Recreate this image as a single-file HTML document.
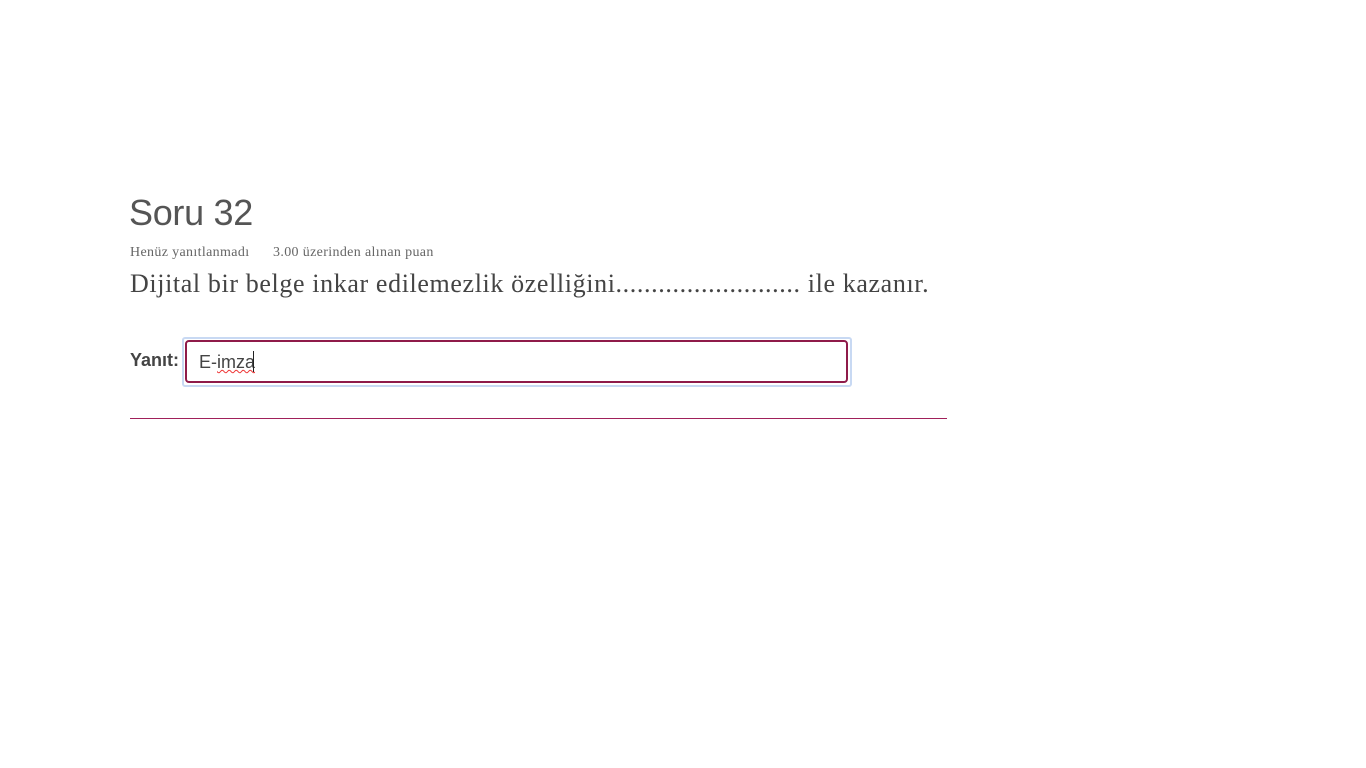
<!DOCTYPE html>
<html><head><meta charset="utf-8"><style>
body{margin:0;background:#fff;width:1366px;height:768px;overflow:hidden;position:relative}
.h{position:absolute;left:129px;top:192px;font:36px "Liberation Sans",sans-serif;color:#555;letter-spacing:-0.3px}
.m{position:absolute;top:245px;font:14px "Liberation Serif",serif;color:#666;letter-spacing:0.35px}
.q{position:absolute;left:130px;top:269px;font:26px "Liberation Serif",serif;color:#444;letter-spacing:0.62px;white-space:nowrap}
.y{position:absolute;left:130px;top:350px;font:bold 18px "Liberation Sans",sans-serif;color:#444}
.box{position:absolute;left:182px;top:337px;width:666px;height:46px;border:2px solid #c8d9f3;border-radius:3px}
.in{position:absolute;left:185px;top:340px;width:659px;height:39px;border:2px solid #8f1b4a;border-radius:4px;background:#fff}
.t{position:absolute;left:199px;top:352px;font:18px "Liberation Sans",sans-serif;color:#444}
.t span{text-decoration:underline wavy #e33;text-decoration-thickness:1px}
.cur{position:absolute;left:253px;top:351px;width:1px;height:21px;background:#222}
.line{position:absolute;left:130px;top:418px;width:817px;height:1px;background:#a0205a}
</style></head><body>
<div class="h">Soru 32</div>
<div class="m" style="left:130px">Henüz yanıtlanmadı</div>
<div class="m" style="left:273px">3.00 üzerinden alınan puan</div>
<div class="q">Dijital bir belge inkar edilemezlik özelliğini.......................... ile kazanır.</div>
<div class="y">Yanıt:</div>
<div class="box"></div>
<div class="in"></div>
<div class="t">E-<span>imza</span></div>
<div class="cur"></div>
<div class="line"></div>
</body></html>
